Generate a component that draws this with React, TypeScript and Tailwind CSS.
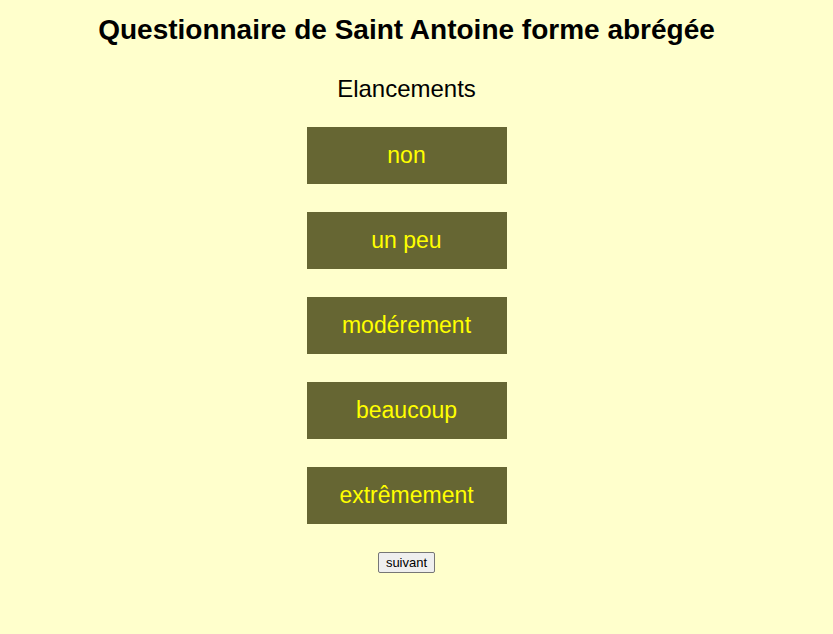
export default function App() {
  const opts = ["non", "un peu", "modérement", "beaucoup", "extrêmement"];
  return (
    <div className="min-h-[634px] w-full bg-[#ffffcc]" style={{ fontFamily: '"Liberation Sans", Arial, sans-serif' }}>
      <div className="w-[813px] flex flex-col items-center pt-[14px]">
        <h1 className="text-[28px] leading-[32px] font-bold text-black">Questionnaire de Saint Antoine forme abrégée</h1>
        <div className="mt-[29px] text-[24px] leading-[28px] text-black">Elancements</div>
        <div className="mt-[24px] flex flex-col gap-[28px]">
          {opts.map((o) => (
            <div key={o} className="w-[200px] h-[57px] bg-[#666633] text-[#ffff00] text-[23px] flex items-center justify-center">
              {o}
            </div>
          ))}
        </div>
        <button className="mt-[28px] w-[57px] h-[21px] text-[13px] leading-none text-black bg-[#efefef] border border-[#767676] rounded-[2px] flex items-center justify-center">
          suivant
        </button>
      </div>
    </div>
  );
}
